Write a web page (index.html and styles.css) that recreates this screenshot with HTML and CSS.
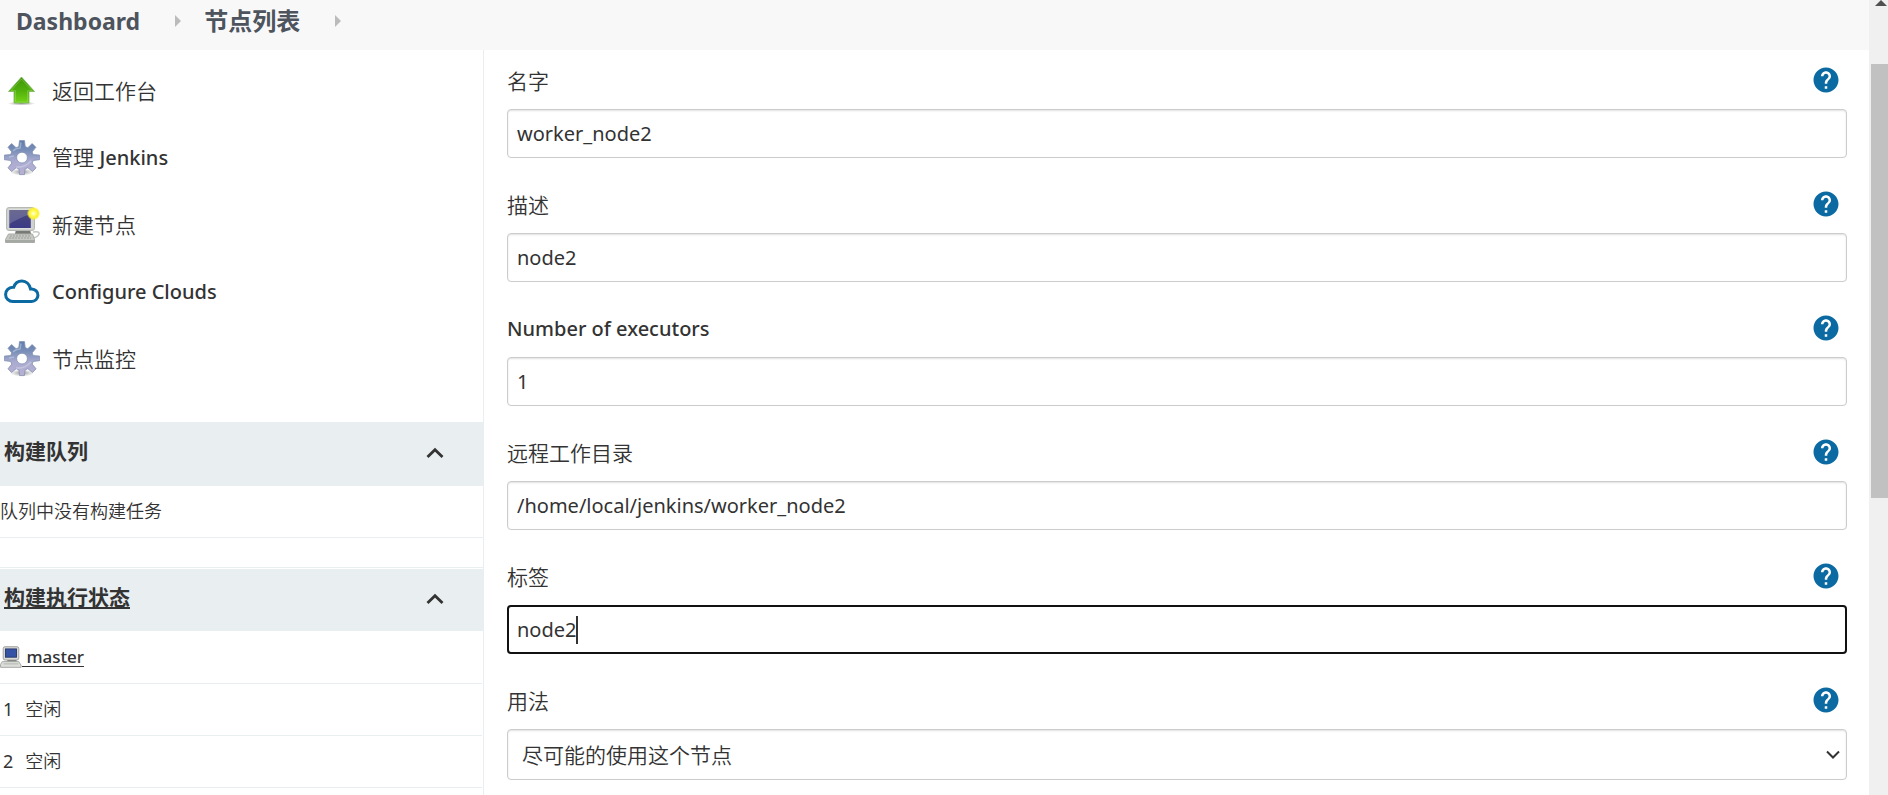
FILE: index.html
```html
<!DOCTYPE html>
<html lang="zh-CN">
<head>
<meta charset="utf-8">
<title>节点列表 [Jenkins]</title>
<link rel="stylesheet" href="styles.css">
</head>
<body>
<svg class="defs" aria-hidden="true">
  <defs>
    <linearGradient id="green" x1="0" y1="0" x2="0" y2="1"><stop offset="0" stop-color="#3f9408"/><stop offset=".5" stop-color="#4fae0b"/><stop offset="1" stop-color="#72d416"/></linearGradient>
    <linearGradient id="metal" x1="0" y1="0" x2="0" y2="1"><stop offset="0" stop-color="#5f7cab"/><stop offset=".3" stop-color="#7b90b9"/><stop offset=".6" stop-color="#aaabd0"/><stop offset="1" stop-color="#bab0d4"/></linearGradient>
    <linearGradient id="screen" x1="0" y1="0" x2="0" y2="1"><stop offset="0" stop-color="#4a4878"/><stop offset="1" stop-color="#3c3a86"/></linearGradient>
    <radialGradient id="glow"><stop offset="0" stop-color="#fffff0"/><stop offset=".35" stop-color="#fffb60"/><stop offset=".7" stop-color="#fbf02c"/><stop offset="1" stop-color="#fbf02c" stop-opacity="0"/></radialGradient>
    <radialGradient id="shade"><stop offset="0" stop-color="#000" stop-opacity=".4"/><stop offset="1" stop-color="#000" stop-opacity="0"/></radialGradient>
    <symbol id="i-up" viewBox="0 0 36 36">
      <ellipse cx="17.500" cy="30.500" rx="14" ry="2" fill="url(#shade)"/>
      <path d="M17.500 4 30.500 18.500h-5.500v11.500h-15V18.500H4.500z" fill="url(#green)" stroke="#7fb45c" stroke-width=".8"/>
      <path d="M17.500 6 28 17.700h-4.500v11.300h-12V17.700H7z" fill="none" stroke="#a4e070" stroke-opacity=".4"/>
    </symbol>
    <symbol id="i-gear" viewBox="0 0 36 36">
      <ellipse cx="18" cy="32" rx="12" ry="3.500" fill="url(#shade)"/>
      <g fill="url(#metal)" stroke="#8290b3" stroke-width=".8" stroke-linejoin="round">
        <path fill-rule="evenodd" d="M15.500.600h5l.7 6 2.600 1.100 4.400-4.100 3.700 3.700-3.800 4.600 1.200 2.700 6.300.5v4.600l-6.300.7-1.200 2.700 4 4.700-3.600 3.700-4.700-3.800-2.700 1.200-.7 5.700h-4.800l-.7-5.700-2.700-1.200-4.700 3.800-3.500-3.700 3.800-4.700-1.200-2.700-6.200-.7v-4.600l6.200-.5 1.200-2.700L4 7.300l3.600-3.700 4.500 4.100 2.700-1.100zM18 12.200a5.400 5.400 0 1 0 0 10.800 5.400 5.400 0 0 0 0-10.800z"/>
      </g>
      <path d="M9 11q3-3 7-3l1-5.500M5 17l5-1M27 21q-6 7-15 6" fill="none" stroke="#dfe5f4" stroke-width="1.500" stroke-opacity=".4"/>
    </symbol>
    <symbol id="i-node-new" viewBox="0 0 36 36">
      <path d="M29 25q7-1 6 2t-6 4" fill="none" stroke="#c4c7c4" stroke-width="1.500"/>
      <path d="M12 22h14l1 5H11z" fill="#777a75"/>
      <rect x="2.500" y=".5" width="28" height="23" rx="2.500" fill="#cfd2cd" stroke="#b5b8b3"/>
      <rect x="4.800" y="2.500" width="22.500" height="19" fill="url(#screen)" stroke="#dcdedc"/>
      <path d="M5.500 3h21v4Q13 12 5.500 17z" fill="#fff" opacity=".18"/>
      <path d="M4.500 27h24l2 5.500v3H1.500v-3z" fill="#c6c9c3" stroke="#a8aba6"/>
      <path d="M6 29h20M5 31h22" stroke="#9c9f99" stroke-dasharray="2 1"/>
      <path d="M2 34h28" stroke="#858883"/>
      <circle cx="29.500" cy="6.500" r="6.800" fill="url(#glow)"/>
    </symbol>
    <symbol id="i-node" viewBox="0 0 24 24">
      <path d="M8 15h10v3H8z" fill="#777"/>
      <rect x="3.500" y=".8" width="17" height="14.500" rx="2" fill="#d7d9d5" stroke="#9a9c98"/>
      <rect x="6" y="3.200" width="12" height="9" fill="#3553a4" stroke="#29366d"/>
      <path d="M2.500 17h18l2.500 4v2.300H.6V20z" fill="#dcdedb" stroke="#a2a4a0"/>
      <path d="M4 19.500h16" stroke="#aeb0ac"/>
    </symbol>
    <symbol id="i-cloud" viewBox="0 0 36 36">
      <path d="M8.700 27.500h18.800a6.300 6.300 0 0 0 .3-12.600h-1.300C25.500 10 22 7 18 7c-3.800 0-7 2.300-8.300 6.300H8.700a7.100 7.100 0 0 0 0 14.200z" fill="none" stroke="#0b6aa2" stroke-width="3"/>
    </symbol>
    <symbol id="i-help" viewBox="0 0 24 24">
      <path fill="#0b6aa2" d="M12 2C6.480 2 2 6.480 2 12s4.480 10 10 10 10-4.480 10-10S17.520 2 12 2zm1 17h-2v-2h2v2zm2.070-7.750-.9.920C13.450 12.900 13 13.500 13 15h-2v-.5c0-1.100.45-2.100 1.170-2.830l1.240-1.260c.37-.36.59-.86.590-1.410 0-1.100-.9-2-2-2s-2 .9-2 2H8c0-2.210 1.790-4 4-4s4 1.790 4 4c0 .88-.36 1.680-.93 2.250z"/>
    </symbol>
    <symbol id="i-chevron" viewBox="0 0 18 12">
      <path d="M1.500 10 9 2.700 16.500 10" fill="none" stroke="#333" stroke-width="2.800"/>
    </symbol>
  </defs>
</svg>

<div class="window">
  <div class="page">
    <nav class="breadcrumbs">
      <a href="#">Dashboard</a>
      <span class="arrow"></span>
      <a href="#">节点列表</a>
      <span class="arrow"></span>
    </nav>

    <div class="columns">
      <aside class="side">
        <nav class="tasks">
          <a href="#"><svg><use href="#i-up"/></svg>返回工作台</a>
          <a href="#"><svg><use href="#i-gear"/></svg><span>管理 <span class="latin">Jenkins</span></span></a>
          <a href="#"><svg><use href="#i-node-new"/></svg>新建节点</a>
          <a href="#"><svg><use href="#i-cloud"/></svg><span class="latin">Configure Clouds</span></a>
          <a href="#"><svg><use href="#i-gear"/></svg>节点监控</a>
        </nav>

        <section class="pane">
          <header class="pane-head">
            <h2>构建队列</h2>
            <button type="button" aria-label="折叠构建队列"><svg><use href="#i-chevron"/></svg></button>
          </header>
          <p class="row">队列中没有构建任务</p>
        </section>

        <section class="pane executors">
          <header class="pane-head">
            <h2><a href="#">构建执行状态</a></h2>
            <button type="button" aria-label="折叠构建执行状态"><svg><use href="#i-chevron"/></svg></button>
          </header>
          <div class="row computer"><svg><use href="#i-node"/></svg><a href="#">&nbsp;master</a></div>
          <div class="row executor"><span class="number">1</span><span>空闲</span></div>
          <div class="row executor"><span class="number">2</span><span>空闲</span></div>
        </section>
      </aside>

      <main>
        <form>
          <div class="field">
            <div class="label"><label for="name">名字</label><button type="button" aria-label="帮助：名字"><svg><use href="#i-help"/></svg></button></div>
            <input id="name" type="text" value="worker_node2">
          </div>
          <div class="field">
            <div class="label"><label for="desc">描述</label><button type="button" aria-label="帮助：描述"><svg><use href="#i-help"/></svg></button></div>
            <input id="desc" type="text" value="node2">
          </div>
          <div class="field">
            <div class="label"><label for="num" class="latin">Number of executors</label><button type="button" aria-label="帮助：Number of executors"><svg><use href="#i-help"/></svg></button></div>
            <input id="num" type="text" value="1">
          </div>
          <div class="field">
            <div class="label"><label for="dir">远程工作目录</label><button type="button" aria-label="帮助：远程工作目录"><svg><use href="#i-help"/></svg></button></div>
            <input id="dir" type="text" value="/home/local/jenkins/worker_node2">
          </div>
          <div class="field active">
            <div class="label"><label for="tags">标签</label><button type="button" aria-label="帮助：标签"><svg><use href="#i-help"/></svg></button></div>
            <input id="tags" type="text" value="node2">
            <span class="caret"></span>
          </div>
          <div class="field">
            <div class="label"><label for="mode">用法</label><button type="button" aria-label="帮助：用法"><svg><use href="#i-help"/></svg></button></div>
            <div class="select">
              <select id="mode"><option>尽可能的使用这个节点</option></select>
              <svg viewBox="0 0 14 9"><path d="M1 1.500l6 6 6-6" fill="none" stroke="#333" stroke-width="2"/></svg>
            </div>
          </div>
        </form>
      </main>
    </div>
  </div>

  <div class="scrollbar" aria-hidden="true">
    <span class="scroll-up"></span>
    <span class="thumb"></span>
  </div>
</div>
</body>
</html>
```
FILE: styles.css
```css
* { box-sizing: border-box; }

body {
  margin: 0;
  background: #fff;
  color: #333;
  font: 350 21px/30px "Noto Sans", "Noto Sans CJK SC", sans-serif;
}

a { color: inherit; text-decoration: none; }
svg { display: block; flex: none; }
.defs { position: absolute; width: 0; height: 0; }

button {
  display: block;
  margin: 0;
  padding: 0;
  border: 0;
  background: none;
  cursor: pointer;
}

.latin { font-size: 20px; font-weight: 500; }

.window {
  display: grid;
  grid-template-columns: minmax(0, 1fr) 19px;
  height: 100vh;
  overflow: hidden;
}

.page {
  display: flex;
  flex-direction: column;
  min-height: 0;
}

.breadcrumbs {
  display: flex;
  align-items: center;
  gap: 35px;
  flex: none;
  padding: 6px 16px 14px;
  background: #f8f8f8;
  color: #4d545d;
  font-size: 24px;
  font-weight: 700;
}
.breadcrumbs a:first-child { font-size: 23px; }
.arrow {
  border: 6px solid transparent;
  border-left-color: #bbb;
  border-right-width: 0;
}
.breadcrumbs a + .arrow { margin-right: -12px; }

.columns {
  display: grid;
  grid-template-columns: 484px minmax(0, 1fr);
  flex: 1;
  min-height: 0;
}

.side {
  min-height: 0;
  border-right: 1px solid #e9eef1;
}

.tasks { padding: 7px 0 30px; }
.tasks a {
  display: flex;
  align-items: center;
  gap: 12px;
  height: 67px;
  padding-left: 4px;
}
.tasks svg { width: 36px; height: 36px; }

.pane-head {
  display: flex;
  align-items: center;
  justify-content: space-between;
  padding: 14px 39px 20px 4px;
  background: #e9eef1;
}
.pane-head h2 { margin: 0; font-size: 21px; font-weight: 700; }
.pane-head a { text-decoration: underline; text-decoration-thickness: 2px; text-underline-offset: 2px; }
.pane-head svg { width: 18px; height: 12px; }
.pane-head button { padding-top: 4px; }

.row {
  display: flex;
  align-items: center;
  height: 52px;
  margin: 0;
  padding-bottom: 2px;
  border-bottom: 1px solid #e9eef1;
  font-size: 18px;
}

.executors { margin-top: 29px; border-top: 1px solid #e9eef1; padding-top: 1px; }
.executors .pane-head { padding: 13px 39px 19px 4px; }
.executors .row { margin-right: 1px; }
.executors .computer { height: 53px; padding-bottom: 1px; }
.computer svg { width: 22px; height: 24px; }
.computer a { font-size: 17px; font-weight: 500; text-decoration: underline; text-underline-offset: 3px; }
.executor { gap: 12px; padding-left: 3px; }
.number { font-weight: 400; }

main { padding: 15px 22px 0 23px; min-height: 0; }

form { display: grid; gap: 31px; }

.field { position: relative; }
.label {
  display: flex;
  align-items: center;
  justify-content: space-between;
  height: 30px;
  margin-bottom: 14px;
  padding-right: 6px;
}
.label label { padding-top: 2px; }
.label svg { width: 30px; height: 30px; }

input, select {
  display: block;
  width: 100%;
  height: 49px;
  border: 1px solid #ccc;
  border-radius: 4px;
  background: #fff;
  box-shadow: inset 0 1px 2px rgba(0, 0, 0, .12);
  color: #333;
  font-family: inherit;
}
input { padding: 0 9px; font-size: 20px; font-weight: 400; }
select { height: 51px; padding: 0 14px; font-size: 21px; font-weight: 350; appearance: none; }

.active input { border: 2px solid #111; padding: 0 8px; box-shadow: none; }
.caret {
  position: absolute;
  bottom: 10px;
  left: 69px;
  width: 2px;
  height: 28px;
  background: #333;
}

.select { position: relative; }
.select svg {
  position: absolute;
  top: 21px;
  right: 7px;
  width: 14px;
  height: 9px;
  pointer-events: none;
}

.scrollbar {
  display: grid;
  grid-template-rows: 64px minmax(0, 434fr) minmax(0, 297fr);
  min-height: 0;
  background: #f0f0f0;
}
.scroll-up {
  justify-self: center;
  align-self: start;
  margin-left: 5px;
  border: 6px solid transparent;
  border-top-width: 0;
  border-bottom-color: #505050;
}
.thumb { margin-left: 2px; background: #c1c1c1; }
```
